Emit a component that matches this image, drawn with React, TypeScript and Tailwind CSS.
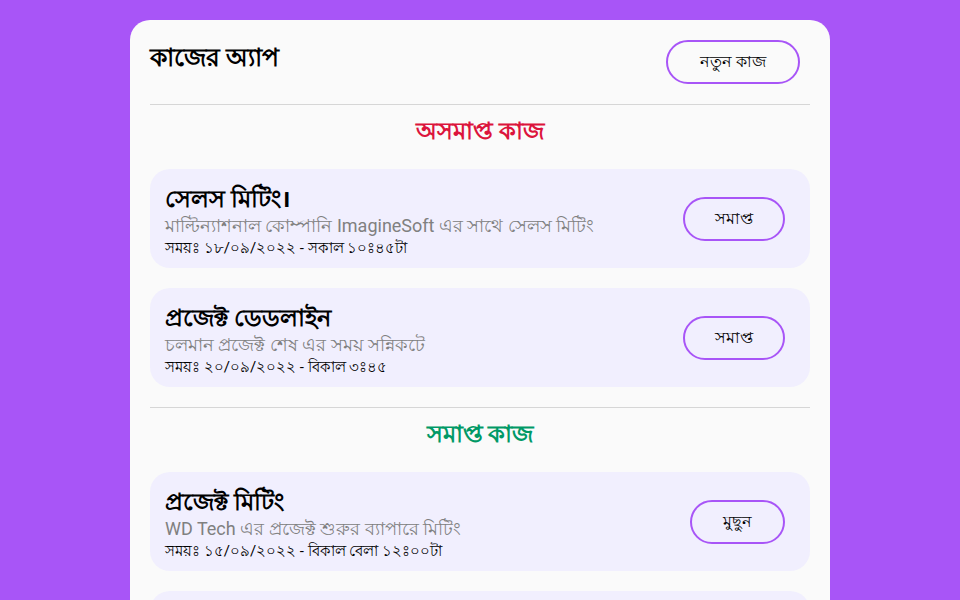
import React from "react"

type Task = {
  title: string
  desc: string
  time: string
}

const pending: Task[] = [
  {
    title: "সেলস মিটিং।",
    desc: "মাল্টিন্যাশনাল কোম্পানি ImagineSoft এর সাথে সেলস মিটিং",
    time: "সময়ঃ ১৮/০৯/২০২২ - সকাল ১০ঃ৪৫টা",
  },
  {
    title: "প্রজেক্ট ডেডলাইন",
    desc: "চলমান প্রজেক্ট শেষ এর সময় সন্নিকটে",
    time: "সময়ঃ ২০/০৯/২০২২ - বিকাল ৩ঃ৪৫",
  },
]

const done: Task[] = [
  {
    title: "প্রজেক্ট মিটিং",
    desc: "WD Tech এর প্রজেক্ট শুরুর ব্যাপারে মিটিং",
    time: "সময়ঃ ১৫/০৯/২০২২ - বিকাল বেলা ১২ঃ০০টা",
  },
  {
    title: "ক্লায়েন্ট কল",
    desc: "নতুন ক্লায়েন্টের সাথে আলোচনা",
    time: "সময়ঃ ১৪/০৯/২০২২ - সকাল ১১ঃ০০টা",
  },
]

function TaskCard({ task, action, wide }: { task: Task; action: string; wide: boolean }) {
  return (
    <div className="flex items-center justify-between rounded-[20px] bg-[#f1effe] pt-[11px] pb-[10px] pl-[15px] pr-[25px]">
      <div className="flex flex-col pt-[4px]">
        <h3 className="text-[24px] font-bold leading-[30px] text-black">{task.title}</h3>
        <p className="text-[18px] leading-[24px] text-[#808080]">{task.desc}</p>
        <p className="text-[15px] leading-[20px] text-black">{task.time}</p>
      </div>
      <button
        className={
          wide
            ? "h-[44px] w-[102px] rounded-full border-2 border-[#a855f7] text-[16px] text-black"
            : "h-[44px] w-[95px] rounded-full border-2 border-[#a855f7] text-[16px] text-black"
        }
      >
        {action}
      </button>
    </div>
  )
}

export default function App() {
  return (
    <div className="flex min-h-screen justify-center bg-[#a855f7] pt-5 font-['Roboto','Noto_Sans',sans-serif]">
      <div className="w-[700px] rounded-t-[20px] bg-[#fafafa] p-5">
        <div className="flex h-[44px] items-center justify-between pr-[10px]">
          <h1 className="mb-2 text-[25px] font-bold leading-[28px] text-black">কাজের অ্যাপ</h1>
          <button className="h-[44px] w-[134px] rounded-full border-2 border-[#a855f7] text-[16px] text-black">
            নতুন কাজ
          </button>
        </div>

        <hr className="mt-5 border-[#d6d6d6]" />
        <h2 className="mt-[10px] mb-[22px] text-center text-[24px] font-bold leading-[32px] text-[#dc143c]">
          অসমাপ্ত কাজ
        </h2>
        <div className="flex flex-col gap-5">
          {pending.map((t) => (
            <TaskCard key={t.title} task={t} action="সমাপ্ত" wide />
          ))}
        </div>

        <hr className="mt-5 border-[#d6d6d6]" />
        <h2 className="mt-[10px] mb-[22px] text-center text-[24px] font-bold leading-[32px] text-[#009966]">
          সমাপ্ত কাজ
        </h2>
        <div className="flex flex-col gap-5">
          {done.map((t) => (
            <TaskCard key={t.title} task={t} action="মুছুন" wide={false} />
          ))}
        </div>
      </div>
    </div>
  )
}
